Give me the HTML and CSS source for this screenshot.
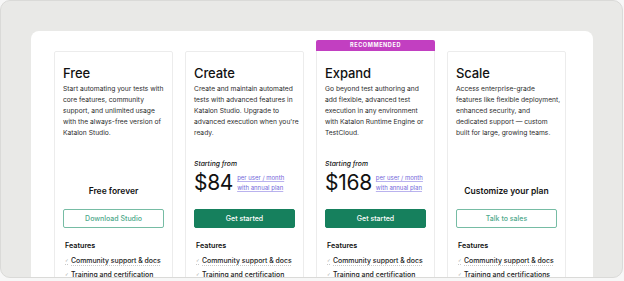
FILE: index.html
```html
<!DOCTYPE html>
<html lang="en">
<head>
 <meta charset="UTF-8">
 <meta name="viewport" content="width=device-width, initial-scale=1">
 <title>Pricing</title>
 <link rel="stylesheet" href="styles.css">
</head>
<body>
 <div class="frame">
  <div class="panel">
   <div class="plans">

    <div class="plan">
     <div class="card">
      <h2 class="plan-name">Free</h2>
      <p class="plan-desc">Start automating your tests with<br>core features, community<br>support, and unlimited usage<br>with the always-free version of<br>Katalon Studio.</p>
      <div class="plan-price">
       <div class="plan-note">Free forever</div>
      </div>
      <a class="btn btn-outline" href="#">Download Studio</a>
      <div class="features">
       <h3>Features</h3>
       <ul>
        <li>Community support &amp; docs</li>
        <li>Training and certification</li>
       </ul>
      </div>
     </div>
    </div>

    <div class="plan">
     <div class="card">
      <h2 class="plan-name">Create</h2>
      <p class="plan-desc">Create and maintain automated<br>tests with advanced features in<br>Katalon Studio. Upgrade to<br>advanced execution when you're<br>ready.</p>
      <div class="plan-price">
       <div class="starting">Starting from</div>
       <div class="price-row">
        <span class="amount">$84</span>
        <span class="price-meta"><a href="#">per user / month</a><a href="#">with annual plan</a></span>
       </div>
      </div>
      <a class="btn btn-solid" href="#">Get started</a>
      <div class="features">
       <h3>Features</h3>
       <ul>
        <li>Community support &amp; docs</li>
        <li>Training and certification</li>
       </ul>
      </div>
     </div>
    </div>

    <div class="plan plan-featured">
     <div class="badge">RECOMMENDED</div>
     <div class="card">
      <h2 class="plan-name">Expand</h2>
      <p class="plan-desc">Go beyond test authoring and<br>add flexible, advanced test<br>execution in any environment<br>with Katalon Runtime Engine or<br>TestCloud.</p>
      <div class="plan-price">
       <div class="starting">Starting from</div>
       <div class="price-row">
        <span class="amount">$168</span>
        <span class="price-meta"><a href="#">per user / month</a><a href="#">with annual plan</a></span>
       </div>
      </div>
      <a class="btn btn-solid" href="#">Get started</a>
      <div class="features">
       <h3>Features</h3>
       <ul>
        <li>Community support &amp; docs</li>
        <li>Training and certification</li>
       </ul>
      </div>
     </div>
    </div>

    <div class="plan">
     <div class="card">
      <h2 class="plan-name">Scale</h2>
      <p class="plan-desc">Access enterprise-grade<br>features like flexible deployment,<br>enhanced security, and<br>dedicated support — custom<br>built for large, growing teams.</p>
      <div class="plan-price">
       <div class="plan-note">Customize your plan</div>
      </div>
      <a class="btn btn-outline" href="#">Talk to sales</a>
      <div class="features">
       <h3>Features</h3>
       <ul>
        <li>Community support &amp; docs</li>
        <li>Training and certifications</li>
       </ul>
      </div>
     </div>
    </div>

   </div>
  </div>
 </div>
</body>
</html>
```

FILE: styles.css
```css
:root {
 --frame-color: #e9e9e7;
 --frame-line: #dadad8;
 --card-line: #ececec;
 --text-color: #111111;
 --body-text: #2c2c2c;
 --green: #16805d;
 --green-soft: #76bca4;
 --link-color: #7468da;
 --badge-color: #c23fc1;
}

html,
body {
 margin: 0;
 padding: 0;
}

body {
 font-family: "Inter", "Liberation Sans", sans-serif;
 background-color: #f7f7f7;
 color: var(--text-color);
}

/* Outer grey window */
.frame {
 box-sizing: border-box;
 width: 623px;
 height: 278px;
 padding: 30px 29px 0 30px;
 background-color: var(--frame-color);
 border: 1px solid var(--frame-line);
 border-radius: 10px;
 overflow: hidden;
}

.panel {
 box-sizing: border-box;
 height: 100%;
 padding: 9px 0 0 23px;
 background-color: #ffffff;
 border-radius: 8px 8px 0 0;
 overflow: hidden;
}

.plans {
 display: flex;
 gap: 12px;
}

.plan {
 width: 119px;
 margin-top: 11px;
}

.plan-featured {
 margin-top: 0;
}

.badge {
 height: 11px;
 line-height: 11px;
 background-color: var(--badge-color);
 color: #ffffff;
 font-size: 5.5px;
 font-weight: 700;
 letter-spacing: 0.6px;
 text-align: center;
 border-radius: 2px 2px 0 0;
}

.card {
 height: 260px;
 padding: 13px 8px 0;
 border: 1px solid var(--card-line);
 border-radius: 2px;
}

.plan-featured .card {
 border-top: none;
 border-radius: 0;
 padding-top: 14px;
}

.plan-name {
 margin: 0;
 font-size: 13px;
 line-height: 16px;
 font-weight: 500;
 letter-spacing: -0.1px;
}

/* Lines broken by hand, as in the design */
.plan-desc {
 height: 55px;
 margin: 3px -6px 0 0;
 font-size: 6.7px;
 line-height: 11px;
 color: var(--body-text);
 white-space: nowrap;
}

/* Price block sits on the bottom of a fixed area */
.plan-price {
 box-sizing: border-box;
 height: 70px;
 padding-bottom: 12px;
 display: flex;
 flex-direction: column;
 justify-content: flex-end;
}

.plan-note {
 font-size: 8.5px;
 line-height: 12px;
 font-weight: 600;
 text-align: center;
}

.starting {
 font-size: 6.8px;
 line-height: 10px;
 font-style: italic;
 font-weight: 500;
 margin-bottom: 3px;
}

.price-row {
 display: flex;
 align-items: center;
 gap: 4px;
 margin-bottom: 3px;
}

.amount {
 font-size: 21px;
 line-height: 22px;
 letter-spacing: -0.3px;
}

.price-meta {
 display: flex;
 flex-direction: column;
}

.price-meta a {
 font-size: 6px;
 line-height: 10px;
 color: var(--link-color);
 text-decoration: underline;
 text-decoration-color: #b9b2ee;
}

.btn {
 display: block;
 box-sizing: border-box;
 height: 19px;
 line-height: 17px;
 font-size: 7px;
 font-weight: 500;
 text-align: center;
 text-decoration: none;
 border-radius: 2px;
}

.btn-solid {
 background-color: var(--green);
 border: 1px solid var(--green);
 color: #ffffff;
}

.btn-outline {
 background-color: #ffffff;
 border: 1px solid var(--green-soft);
 color: #4ea98b;
}

.features {
 margin-top: 13px;
 padding-left: 2px;
}

.features h3 {
 margin: 0 0 3px;
 font-size: 7.2px;
 line-height: 10px;
 font-weight: 600;
}

.features ul {
 list-style: none;
 margin: 0;
 padding: 0;
}

.features li {
 display: flex;
 gap: 2px;
 font-size: 6.9px;
 line-height: 13.5px;
 font-weight: 500;
 color: #222222;
 text-decoration: underline dotted #c8c8c8;
 text-underline-offset: 2px;
}

.features li::before {
 content: "✓";
 font-family: "DejaVu Sans", sans-serif;
 font-size: 4.5px;
 color: #8a8a8a;
 width: 4px;
}
```
